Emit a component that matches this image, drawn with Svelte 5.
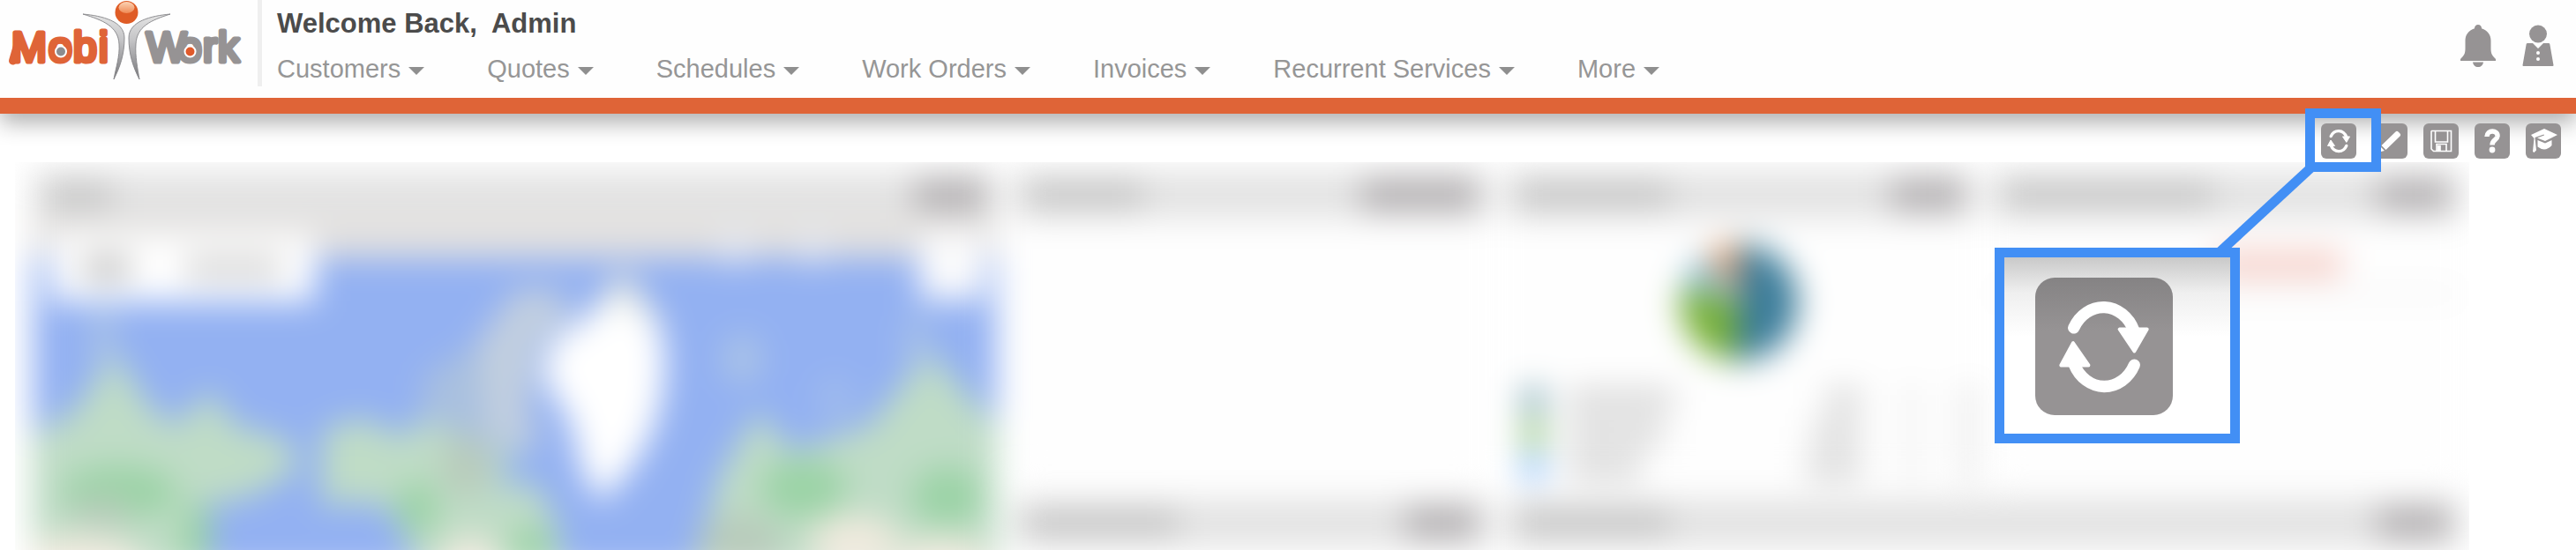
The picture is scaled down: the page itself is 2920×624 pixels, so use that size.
<script>
  const menus = ['Customers', 'Quotes', 'Schedules', 'Work Orders', 'Invoices', 'Recurrent Services', 'More'];
  const legend = [
    { tone: 'teal', name: 120, count: 40 },
    { tone: 'green', name: 108, count: 56 },
    { tone: 'sky', name: 84, count: 62 }
  ];
</script>

{#snippet refresh()}
  <svg viewBox="0 0 40 40" aria-hidden="true">
    <g fill="none" stroke="#fff" stroke-width="3.4" stroke-linecap="round">
      <path d="M11.2 14.6A9.7 11.2 0 0 1 28.7 15.4" />
      <path d="M28.8 25.4A9.7 11.2 0 0 1 11.3 25.2" />
    </g>
    <path fill="#fff" stroke="#fff" stroke-linejoin="round" d="M24.5 15H32.5L28.8 21.4ZM7.5 25.5H15.5L11 19Z" />
  </svg>
{/snippet}

<div class="page">
  <header>
    <a class="logo" href="#home" aria-label="MobiWork home">
      <svg viewBox="0 0 292 98" aria-hidden="true">
        <defs>
          <linearGradient id="limb" x1="0" x2="0" y1="0" y2="1">
            <stop offset="0" stop-color="#e4e4e4" /><stop offset=".4" stop-color="#c4c4c6" /><stop offset="1" stop-color="#77777a" />
          </linearGradient>
          <linearGradient id="shine" x1="0" x2="0" y1="0" y2="1">
            <stop offset="0" stop-color="#fbd3b4" /><stop offset="1" stop-color="#ef8a56" />
          </linearGradient>
        </defs>
        <g class="letters">
          <text x="13 55 83 112" y="70" fill="#df6437" stroke="#df6437">Mobi</text>
          <text x="166 202 230 247" y="70" fill="#969394" stroke="#969394">Work</text>
        </g>
        <path d="M14.500 69L20 50" stroke="#df6437" stroke-width="9" stroke-linecap="round" />
        <circle cx="69" cy="58.500" r="6" fill="#8c8c8f" stroke="#fff" stroke-width="2" />
        <circle cx="215.500" cy="58.500" r="6" fill="#e05a2b" stroke="#fff" stroke-width="2" />
        <g fill="url(#limb)" stroke="#858588" stroke-width=".9">
          <path d="M94 16C116 18 141 24 141 43C141 62 136 76 129 90C131 78 136 64 135 50C134 30 117 23 94 16Z" />
          <path d="M193 16C171 18 146 24 146 43C146 62 151 76 158 90C156 78 153 64 154 50C155 30 171 23 193 16Z" />
        </g>
        <circle cx="143.500" cy="14" r="13" fill="#df5c26" />
        <ellipse cx="143.500" cy="8.500" rx="9" ry="6.500" fill="url(#shine)" />
      </svg>
    </a>
    <div class="main">
      <h1>Welcome Back,&nbsp; Admin</h1>
      <nav aria-label="Main">
        {#each menus as item}
          <button class="menu" type="button">{item}<svg viewBox="0 0 18 9" aria-hidden="true"><path d="M0 0H18L9 9Z" /></svg></button>
        {/each}
      </nav>
    </div>
    <div class="account">
      <button type="button" aria-label="Notifications">
        <svg width="40" height="48" viewBox="0 0 40 48" aria-hidden="true">
          <path d="M20 0a4 4 0 0 1 4 4.300C31 6.500 34.500 12 34.500 18V27C34.500 33 36 35 40 39V41H0V39C4 35 5.500 33 5.500 27V18C5.500 12 9 6.500 16 4.300A4 4 0 0 1 20 0ZM14 42.500H26C25 50 15 50 14 42.500Z" />
        </svg>
      </button>
      <button type="button" aria-label="Profile">
        <svg width="36" height="48" viewBox="0 0 36 48" aria-hidden="true">
          <circle cx="18" cy="10.500" r="10" />
          <path d="M6 21H12L18 27L24 21H30Q31 21 31.300 22L35.500 46Q35.600 47 34.500 47H1.500Q.4 47 .5 46L4.700 22Q5 21 6 21Z" />
          <circle cx="18" cy="32" r="2" fill="#fff" /><circle cx="18" cy="39" r="2" fill="#fff" />
        </svg>
      </button>
    </div>
  </header>

  <div class="tools">
    <button type="button" aria-label="Refresh">{@render refresh()}</button>
    <button type="button" aria-label="Edit">
      <svg viewBox="0 0 40 40" aria-hidden="true">
        <path fill="#fff" d="M26.500 9.500Q28 8 29.500 9.500L31.500 11.500Q33 13 31.500 14.500L15.500 30L10.500 25ZM9.500 26.500L14 31L8 32.500Z" />
      </svg>
    </button>
    <button type="button" aria-label="Save">
      <svg viewBox="0 0 40 40" aria-hidden="true" fill="none" stroke="#fff" stroke-width="1.600">
        <path d="M9.500 8.500H31.500V31.500H11.500L9 29V9ZM13.500 9V21H27.500V9M15 31V23.500H26V31" /><path fill="#fff" d="M16.500 25.500H19V31H16.500Z" />
      </svg>
    </button>
    <button type="button" aria-label="Help">
      <svg viewBox="0 0 40 40" aria-hidden="true">
        <path fill="none" stroke="#fff" stroke-width="5.500" d="M14 15C14 7 26.500 7 26 14.500C25.500 19 20 18.500 20 24.500" /><circle cx="20" cy="30" r="3.400" fill="#fff" />
      </svg>
    </button>
    <button type="button" aria-label="Training">
      <svg viewBox="0 0 40 40" aria-hidden="true" fill="#fff">
        <path d="M21 6L36 13L22 20L13 16.500L21 13.500L20.500 12.500L10.500 16L12 30.500L9.500 33L8 32L9.500 17L6 13Z" />
        <path d="M13.500 19L22 22.500L29.500 19V25Q22 33 13.500 26.500Z" />
      </svg>
    </button>
  </div>

  <main>
    <div class="board">
      <section class="panel map">
        <div class="bar"><i class="title short"></i><i class="actions"></i></div>
        <div class="canvas">
          <svg viewBox="0 0 1091 400" preserveAspectRatio="xMinYMin slice" aria-hidden="true">
            <path fill="#e3e1df" d="M0 0H1091V44H0Z" />
            <path fill="#93b1f2" d="M0 44H1091V400H0Z" />
            <g fill="#bfdcc6">
              <path d="M-8 250L48 217L92 150L133 214L163 234L200 194L229 234L288 250L302 284L244 316L192 325L178 400H-8Z" />
              <path d="M327 240L370 225L422 248L444 217L466 194L496 244L510 257L550 257L540 277L525 304L570 300L592 344L600 400H437L407 331L377 321L327 325Z" />
              <path d="M821 218L858 264L947 234L1014 150L1073 216L1091 231V400H747L777 291Z" />
            </g>
            <path fill="#c2cfdf" d="M547 80L590 80L612 108L570 141L560 224L580 260L505 250L470 240L460 200L510 131Z" />
            <path fill="#a9c0df" d="M440 180L505 140L515 250L540 290L490 250L445 230Z" />
            <path fill="#e0e5df" d="M622 117L668 56L714 120L690 145Z" />
            <path fill="#fff" d="M666 90L706 120L716 150L713 200L700 245L676 285L642 322L621 284L609 231L576 177L588 137L630 110Z" />
            <g fill="#abc4e6"><ellipse cx="803" cy="159" rx="22" ry="29" /><ellipse cx="80" cy="135" rx="13" ry="38" /><ellipse cx="1000" cy="140" rx="12" ry="34" /><ellipse cx="908" cy="205" rx="18" ry="25" opacity=".6" /></g>
            <g fill="#9bd3a6"><ellipse cx="98" cy="310" rx="65" ry="30" /><ellipse cx="185" cy="360" rx="18" ry="40" /><ellipse cx="435" cy="328" rx="24" ry="30" /><ellipse cx="872" cy="305" rx="48" ry="34" /><ellipse cx="1035" cy="315" rx="40" ry="34" /><ellipse cx="565" cy="372" rx="24" ry="24" /></g>
            <g fill="#b8cbbb"><ellipse cx="78" cy="332" rx="34" ry="18" /><ellipse cx="490" cy="280" rx="28" ry="36" /><ellipse cx="800" cy="370" rx="48" ry="36" /></g>
            <g fill="#f0eade"><ellipse cx="50" cy="388" rx="76" ry="30" /><ellipse cx="495" cy="384" rx="34" ry="24" /><ellipse cx="930" cy="366" rx="52" ry="30" /><ellipse cx="1030" cy="388" rx="52" ry="28" /></g>
            <g fill="#e6e8ee"><ellipse cx="795" cy="32" rx="22" ry="20" /><ellipse cx="883" cy="32" rx="18" ry="20" /></g>
          </svg>
          <div class="switch"><i></i><i></i></div>
          <div class="expand"></div>
        </div>
      </section>
      <section class="panel">
        <div class="bar"><i class="title"></i><i class="actions wide"></i></div>
      </section>
      <section class="panel">
        <div class="bar"><i class="title long"></i><i class="actions"></i></div>
        <div class="chart">
          <div class="pie"></div>
          <div class="legend">
            {#each legend as row}
              <div class="entry">
                <span class="name"><i class="dot {row.tone}"></i><i class="ink" style="width: {row.name}px"></i></span>
                <span class="count"><i class="ink" style="width: {row.count}px"></i></span>
                <i class="ink faint"></i>
                <i class="ink"></i>
              </div>
            {/each}
          </div>
        </div>
      </section>
      <section class="panel">
        <div class="bar"><i class="title longest"></i><i class="actions"></i></div>
        <div class="alert"><i></i></div>
      </section>
      <section class="panel">
        <div class="bar"><i class="title long"></i><i class="actions"></i></div>
      </section>
      <section class="panel double">
        <div class="bar"><i class="title long"></i><i class="actions"></i></div>
      </section>
    </div>
  </main>

  <div class="callout">
    <svg class="link" viewBox="0 0 120 104" aria-hidden="true"><path d="M-1 101L104 4" stroke="#428ff5" stroke-width="11" /></svg>
    <div class="target"></div>
    <div class="lens"><div class="large">{@render refresh()}</div></div>
  </div>
</div>

<style>
  :global(body) {
    margin: 0;
    background: #fff;
  }
  .page {
    position: relative;
    height: 100vh;
    display: flex;
    flex-direction: column;
    overflow: hidden;
    font-family: "Liberation Sans", Arial, sans-serif;
  }
  button {
    border: 0;
    padding: 0;
    background: none;
    font: inherit;
    color: inherit;
    cursor: pointer;
  }
  svg {
    display: block;
  }
  header {
    display: flex;
    flex: none;
    align-items: flex-start;
    height: 111px;
    border-bottom: 18px solid #df6437;
    background: #fefefe;
    box-shadow: 0 10px 24px rgba(0, 0, 0, 0.32);
  }
  .logo {
    flex: none;
    border-right: 5px solid #efefef;
  }
  .logo svg {
    width: 292px;
    height: 98px;
  }
  .letters {
    font-size: 48px;
    stroke-width: 5px;
    stroke-linejoin: round;
  }
  .main {
    flex: 1;
    padding: 8px 0 0 17px;
  }
  h1 {
    margin: 0;
    font-size: 31px;
    line-height: 38px;
    font-weight: 700;
    color: #4b4b4b;
    white-space: nowrap;
  }
  nav {
    display: flex;
    gap: 71px;
    padding-top: 14px;
  }
  .menu {
    display: flex;
    align-items: center;
    gap: 9px;
    font-size: 29px;
    line-height: 36px;
    color: #969696;
    white-space: nowrap;
  }
  .menu svg {
    width: 18px;
    height: 9px;
    margin-top: 4px;
    fill: #8f8f8f;
  }
  .account {
    display: flex;
    gap: 30px;
    padding: 28px 25px 0 0;
    fill: #969394;
  }
  .tools {
    display: flex;
    flex: none;
    justify-content: flex-end;
    gap: 18px;
    padding: 11px 17px 4px 0;
  }
  .tools button {
    width: 40px;
    height: 40px;
    border-radius: 6px;
    background: #969394;
  }
  main {
    flex: 1;
    min-height: 0;
    margin: 0 121px 0 17px;
    overflow: hidden;
  }
  .board {
    display: grid;
    grid-template-columns: 1091fr 538fr 532fr 532fr;
    grid-template-rows: 354px 400px;
    gap: 18px;
    padding: 10px 10px 0 20px;
    filter: blur(18px);
  }
  .panel {
    background: #fefefe;
    min-width: 0;
  }
  .map {
    grid-row: span 2;
  }
  .double {
    grid-column: span 2;
  }
  .bar {
    display: flex;
    justify-content: space-between;
    align-items: center;
    height: 54px;
    padding: 0 12px 0 16px;
    background: #e3e3e3;
  }
  .title {
    width: 132px;
    height: 28px;
    background: #c4c4c4;
  }
  .title.short {
    width: 74px;
  }
  .title.long {
    width: 172px;
  }
  .title.longest {
    width: 236px;
  }
  .actions {
    width: 82px;
    height: 38px;
    background: #b5b2b4;
  }
  .actions.wide {
    width: 132px;
  }
  .canvas {
    position: relative;
  }
  .canvas svg {
    width: 100%;
    height: 400px;
  }
  .switch {
    position: absolute;
    top: 18px;
    left: 20px;
    display: flex;
    align-items: center;
    gap: 60px;
    width: 228px;
    height: 76px;
    padding: 0 36px;
    background: #fff;
  }
  .switch i {
    width: 56px;
    height: 28px;
    background: #c4c4c4;
  }
  .switch i + i {
    width: 110px;
    background: #d6d6d6;
  }
  .expand {
    position: absolute;
    top: 14px;
    right: 14px;
    width: 74px;
    height: 78px;
    background: #fbfbfc;
  }
  .chart {
    display: flex;
    flex-direction: column;
    align-items: center;
    gap: 30px;
    padding: 28px 0 0 20px;
  }
  .pie {
    width: 134px;
    height: 134px;
    margin-right: 22px;
    border-radius: 50%;
    background: conic-gradient(#3b7c9a 0 51%, #78b138 51% 79%, #8fbfd4 79% 91%, #f0a470 91%);
  }
  .legend {
    display: grid;
    gap: 10px;
    width: 100%;
  }
  .entry {
    display: grid;
    grid-template-columns: 1fr 64px 14px 14px;
    gap: 50px;
    align-items: center;
    height: 28px;
  }
  .name {
    display: flex;
    align-items: center;
    gap: 26px;
  }
  .dot {
    width: 26px;
    height: 28px;
  }
  .teal {
    background: #7ba6b4;
  }
  .green {
    background: #8fc474;
  }
  .sky {
    background: #88bdfb;
  }
  .ink {
    display: block;
    height: 24px;
    background: #d4d4d4;
  }
  .faint {
    background: #e4e4e4;
  }
  .count {
    display: flex;
    justify-content: flex-end;
  }
  .alert {
    display: flex;
    justify-content: center;
    height: 88px;
    padding-top: 36px;
    box-sizing: border-box;
    border-bottom: 6px solid #eee;
  }
  .alert i {
    width: 144px;
    height: 32px;
    margin-left: 120px;
    background: #f6d2cb;
  }
  .callout {
    position: absolute;
    top: 123px;
    right: 221px;
    width: 438px;
    height: 380px;
    pointer-events: none;
  }
  .target,
  .lens,
  .link {
    position: absolute;
    box-sizing: border-box;
  }
  .target {
    top: 0;
    right: 0;
    width: 86px;
    height: 72px;
    border: 11px solid #428ff5;
  }
  .link {
    top: 62px;
    left: 256px;
    width: 120px;
    height: 104px;
    overflow: visible;
  }
  .lens {
    left: 0;
    bottom: 0;
    width: 278px;
    height: 222px;
    padding: 23px 35px;
    border: 11px solid #428ff5;
    background: linear-gradient(#c9c9c9, #efefef 40px, #fff 90px);
  }
  .large {
    width: 156px;
    height: 156px;
    border-radius: 22px;
    background: linear-gradient(#858384, #969394 60px);
  }
</style>
